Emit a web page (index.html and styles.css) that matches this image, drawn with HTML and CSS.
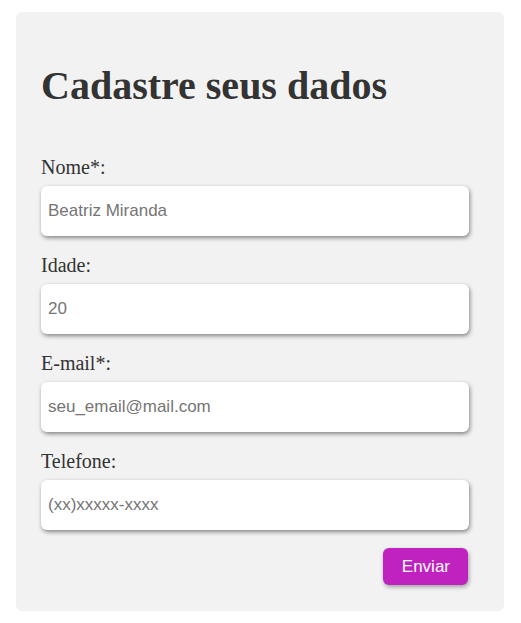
FILE: index.html
```html
<!DOCTYPE html>
<html lang="pt-BR">
<head>
<meta charset="utf-8">
<title>Cadastro</title>
<link rel="stylesheet" href="styles.css">
</head>
<body>
<form class="card">
  <h1 class="title">Cadastre seus dados</h1>
  <div class="field">
    <label class="label" for="nome">Nome*:</label>
    <input class="input" id="nome" type="text" placeholder="Beatriz Miranda">
  </div>
  <div class="field">
    <label class="label" for="idade">Idade:</label>
    <input class="input" id="idade" type="text" placeholder="20">
  </div>
  <div class="field">
    <label class="label" for="email">E-mail*:</label>
    <input class="input" id="email" type="text" placeholder="seu_email@mail.com">
  </div>
  <div class="field">
    <label class="label" for="tel">Telefone:</label>
    <input class="input" id="tel" type="text" placeholder="(xx)xxxxx-xxxx">
  </div>
  <div class="actions">
    <button class="button" type="button">Enviar</button>
  </div>
</form>
</body>
</html>
```
FILE: styles.css
```css
html, body {
  margin: 0;
  background: #ffffff;
}
body {
  padding: 12px 17px 12px 16px;
  font-family: "Liberation Serif", "Times New Roman", serif;
  color: #333333;
}
.card {
  display: flex;
  flex-direction: column;
  background: #f2f2f2;
  border-radius: 6px;
  padding: 51px 35px 25px 25px;
  height: 599px;
  box-sizing: border-box;
}
.title {
  margin: 0 0 47px 0;
  font-size: 40px;
  font-weight: bold;
  line-height: 46px;
  color: #333333;
}
.field {
  display: flex;
  flex-direction: column;
  gap: 8px;
  margin-bottom: 18px;
}
.label {
  font-size: 20px;
  line-height: 22px;
  color: #333333;
}
.input {
  box-sizing: border-box;
  height: 50px;
  width: 100%;
  border: none;
  border-radius: 6px;
  background: #ffffff;
  box-shadow: 1px 2px 4px rgba(0, 0, 0, 0.45);
  padding: 0 7px;
  font-family: "Liberation Sans", Arial, sans-serif;
  font-size: 17px;
  color: #757575;
  outline: none;
}
.input::placeholder {
  color: #757575;
  opacity: 1;
}
.actions {
  display: flex;
  justify-content: flex-end;
}
.button {
  height: 37px;
  padding: 0 18px 0 19px;
  border: none;
  border-radius: 6px;
  background: #bf22bf;
  color: #ffffff;
  font-family: "Liberation Sans", Arial, sans-serif;
  font-size: 17px;
  box-shadow: 1px 2px 4px rgba(0, 0, 0, 0.35);
  margin-right: 1px;
}
```
